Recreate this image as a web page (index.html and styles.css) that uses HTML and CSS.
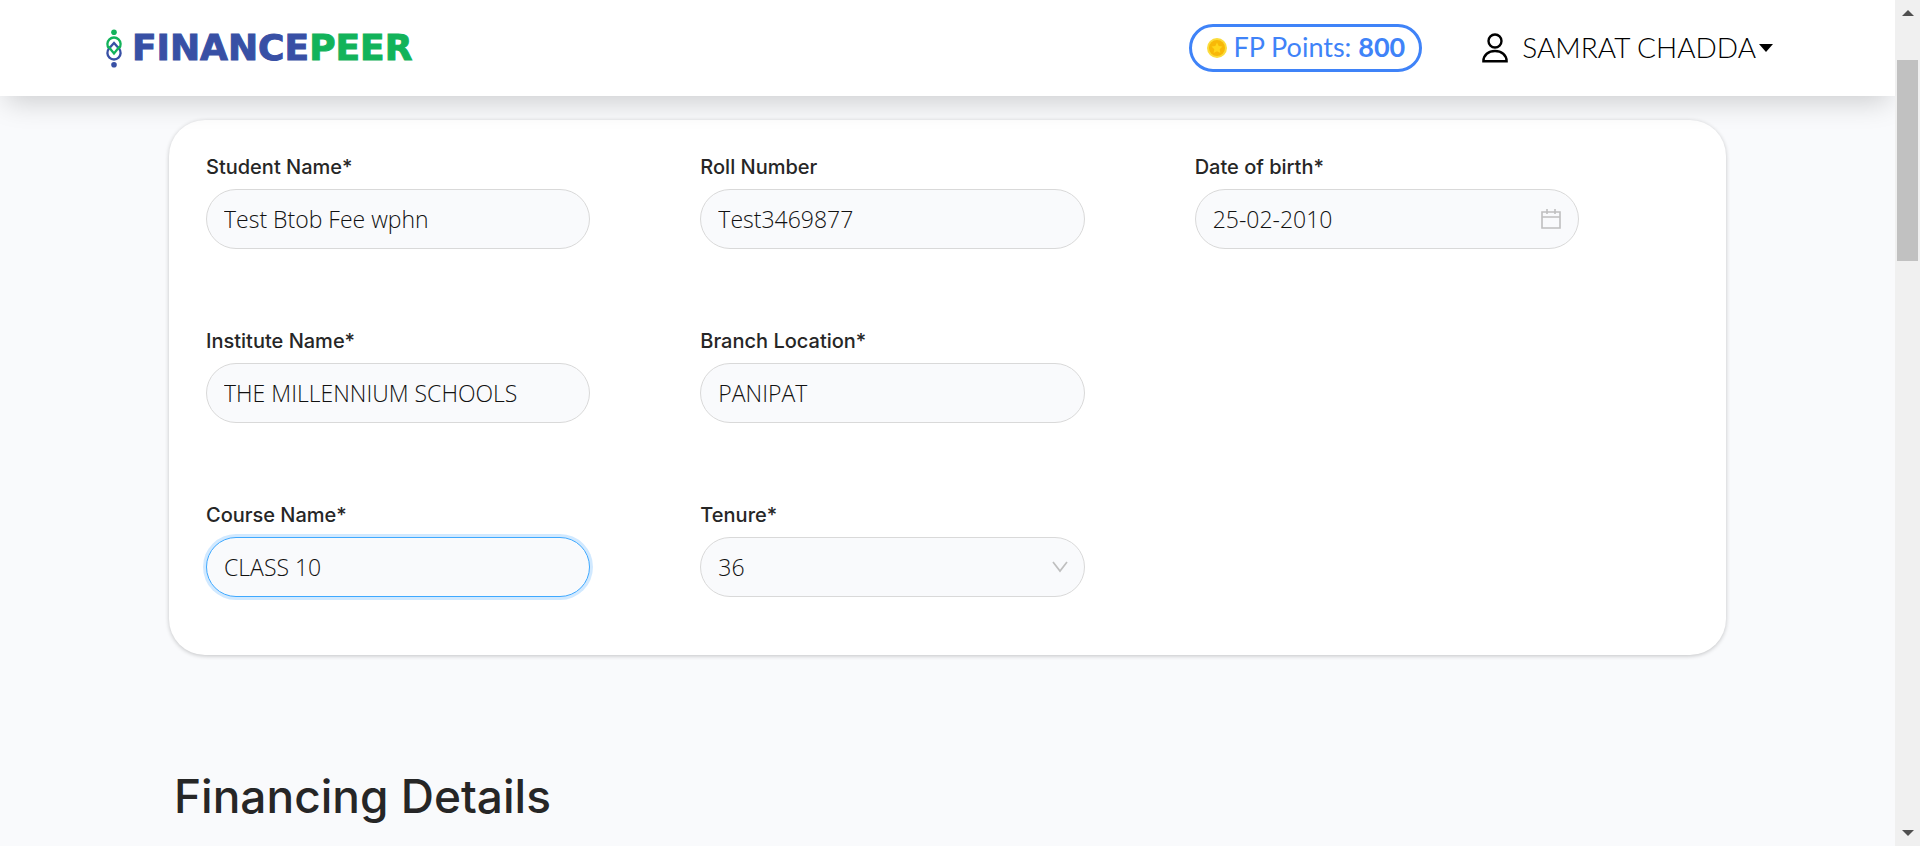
FILE: index.html
```html
<!DOCTYPE html>
<html lang="en">
<head>
<meta charset="utf-8">
<meta name="viewport" content="width=device-width, initial-scale=1">
<title>Financepeer</title>
<link rel="stylesheet" href="styles.css">
</head>
<body>
<div class="page">
  <header class="topbar">
    <a class="brand" href="#">
      <svg class="brand-mark" viewBox="49 55 48 118" aria-hidden="true">
        <circle cx="73" cy="65" r="8.500" fill="#12b35a"/>
        <circle cx="73" cy="163" r="8.500" fill="#3850a5"/>
        <path d="M58 114A20 20 0 1 1 88 114" fill="none" stroke="#12b35a" stroke-width="7"/>
        <path d="M58 114A20 20 0 1 0 88 114L73 97Z" fill="none" stroke="#3850a5" stroke-width="7"/>
        <path d="M56 108L73 129L90 108" fill="none" stroke="#12b35a" stroke-width="7"/>
      </svg>
      <span class="brand-name"><span class="brand-blue">FINANCE</span><span class="brand-green">PEER</span></span>
    </a>
    <div class="account">
      <a class="points" href="#">
        <svg class="coin" viewBox="0 0 20 20" aria-hidden="true">
          <circle cx="10" cy="10" r="10" fill="#fbdc3c"/>
          <circle cx="10" cy="10" r="8" fill="#f8b808"/>
          <path d="M10 4.500l1.700 3.500 3.800.5-2.800 2.700.7 3.800-3.400-1.800-3.400 1.800.7-3.800L4.500 8.500l3.800-.5z" fill="#ffd51a"/>
        </svg>
        <span class="account-text">FP Points: <strong>800</strong></span>
      </a>
      <button class="user" type="button">
        <svg class="user-icon" viewBox="0 0 26 30" aria-hidden="true">
          <circle cx="13" cy="8" r="6.500" fill="none" stroke="#000" stroke-width="2.400"/>
          <path d="M1.400 28.200C1.400 22 6.500 18 13 18s11.600 4 11.600 10.200z" fill="none" stroke="#000" stroke-width="2.400"/>
        </svg>
        <span class="account-text">SAMRAT CHADDA</span>
        <svg class="caret" viewBox="0 0 14 8" aria-hidden="true"><path d="M0 0h14L7 8z"/></svg>
      </button>
    </div>
  </header>

  <main class="content">
    <form class="card">
      <div class="field">
        <label for="student">Student Name*</label>
        <input id="student" class="control" type="text" value="Test Btob Fee wphn">
      </div>
      <div class="field">
        <label for="roll">Roll Number</label>
        <input id="roll" class="control" type="text" value="Test3469877">
      </div>
      <div class="field">
        <label for="dob">Date of birth*</label>
        <div class="control-wrap">
          <input id="dob" class="control" type="text" value="25-02-2010">
          <svg class="suffix calendar" viewBox="0 0 20 20" aria-hidden="true">
            <path d="M1 3h18v16H1zM1 8h18M6 0v5M14 0v5" fill="none" stroke="#bfbfbf" stroke-width="1.600"/>
          </svg>
        </div>
      </div>
      <div class="field first">
        <label for="institute">Institute Name*</label>
        <input id="institute" class="control" type="text" value="THE MILLENNIUM SCHOOLS">
      </div>
      <div class="field">
        <label for="branch">Branch Location*</label>
        <input id="branch" class="control" type="text" value="PANIPAT">
      </div>
      <div class="field first">
        <label for="course">Course Name*</label>
        <input id="course" class="control active" type="text" value="CLASS 10">
      </div>
      <div class="field">
        <label for="tenure">Tenure*</label>
        <div class="control-wrap">
          <select id="tenure" class="control"><option>36</option></select>
          <svg class="suffix chevron" viewBox="0 0 16 12" aria-hidden="true">
            <path d="M1 1l7 9 7-9" fill="none" stroke="#bfbfbf" stroke-width="1.700"/>
          </svg>
        </div>
      </div>
    </form>
    <h2 class="section-title">Financing Details</h2>
  </main>
</div>
<div class="scrollbar" aria-hidden="true">
  <svg class="scroll-arrow" viewBox="0 0 12 6"><path d="M6 0l6 6H0z"/></svg>
  <div class="scroll-track"><div class="scroll-thumb"></div></div>
  <svg class="scroll-arrow" viewBox="0 0 12 6"><path d="M0 0h12L6 6z"/></svg>
</div>
</body>
</html>
```
FILE: styles.css
```css
* {
  box-sizing: border-box;
}

body {
  margin: 0;
  display: flex;
  min-height: 100vh;
  background: #f9fafc;
  color: #262626;
  font-family: "Open Sans", "Noto Sans", sans-serif;
}

.page {
  flex: 1;
  min-width: 0;
  overflow: hidden;
}

/* Header */
.topbar {
  position: relative;
  z-index: 1;
  display: flex;
  align-items: center;
  justify-content: space-between;
  min-height: 96px;
  padding: 0 122px 0 106px;
  background: #fff;
  box-shadow: 0 12px 28px -6px rgba(0, 0, 0, 0.18);
}

.brand {
  display: flex;
  align-items: center;
  gap: 10px;
  text-decoration: none;
}

.brand-mark {
  width: 16px;
  height: 39px;
}

.brand-name {
  font: 700 36px/40px "DejaVu Sans", sans-serif;
}

.brand-blue {
  color: #3850a5;
  -webkit-text-stroke: 1px #3850a5;
}

.brand-green {
  color: #12b35a;
  -webkit-text-stroke: 1px #12b35a;
}

.account {
  display: flex;
  align-items: center;
  gap: 60px;
  font: 300 28px/36px Lato, sans-serif;
}

.account-text {
  padding-bottom: 3px;
}

.points {
  display: flex;
  align-items: center;
  gap: 6px;
  height: 48px;
  padding: 0 14px 0 15px;
  border: 3px solid #3f83f8;
  border-radius: 24px;
  color: #3f83f8;
  font-size: 27px;
  font-weight: 400;
  text-decoration: none;
}

.points strong {
  font-weight: 700;
}

.coin {
  width: 20px;
  height: 20px;
}

.user {
  display: flex;
  align-items: center;
  padding: 0;
  border: 0;
  background: none;
  color: #000;
  font: inherit;
}

.user-icon {
  width: 26px;
  height: 30px;
  margin-right: 14px;
}

.caret {
  width: 14px;
  height: 8px;
  margin-left: 3px;
}

/* Form card */
.content {
  padding: 24px 169px 0;
}

.card {
  display: grid;
  grid-template-columns: repeat(3, 1fr);
  row-gap: 77px;
  padding: 32px 37px 58px;
  border-radius: 36px;
  background: #fff;
  box-shadow: 0 1px 4px rgba(0, 0, 0, 0.22);
}

.field {
  display: flex;
  flex-direction: column;
  gap: 7px;
  min-width: 0;
  padding-right: 110px;
}

.first {
  grid-column: 1;
}

.field label {
  font: 500 20px/30px Inter, sans-serif;
}

.control {
  width: 100%;
  height: 60px;
  margin: 0;
  padding: 0 17px;
  border: 1px solid #d9d9d9;
  border-radius: 30px;
  outline: 0;
  appearance: none;
  background: #f9fafc;
  color: #111;
  font: 300 23px/36px "Open Sans", "Noto Sans", sans-serif;
}

.active {
  border-color: #40a9ff;
  box-shadow: 0 0 0 3px rgba(24, 144, 255, 0.2);
}

.control-wrap {
  position: relative;
}

.suffix {
  position: absolute;
  top: 50%;
  transform: translateY(-50%);
  pointer-events: none;
}

.calendar {
  right: 18px;
  width: 20px;
  height: 20px;
}

.chevron {
  right: 17px;
  width: 16px;
  height: 12px;
}

.section-title {
  margin: 108px 5px 0;
  font: 500 46px/66px Inter, sans-serif;
}

/* Scrollbar */
.scrollbar {
  display: flex;
  flex-direction: column;
  align-items: center;
  gap: 44px;
  width: 25px;
  padding: 10px 0;
  background: #f0f0f0;
}

.scroll-arrow {
  width: 12px;
  height: 6px;
  fill: #505050;
}

.scroll-track {
  flex: 1;
  width: 21px;
}

.scroll-thumb {
  height: 26%;
  min-height: 201px;
  background: #c1c1c1;
}
```
